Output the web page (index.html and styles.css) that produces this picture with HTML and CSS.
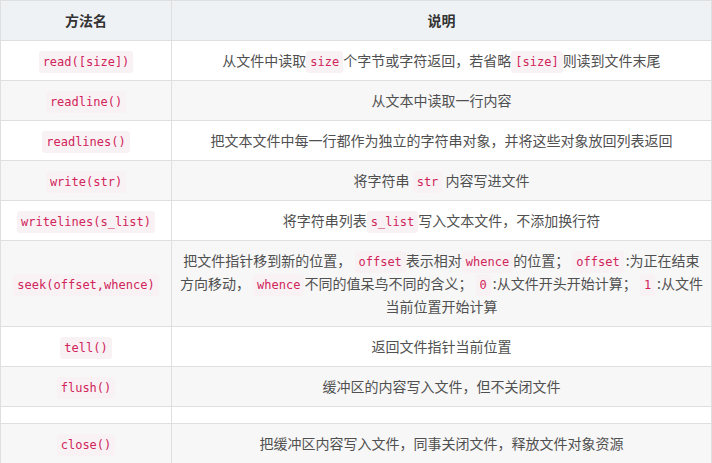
FILE: index.html
```html
<!DOCTYPE html>
<html lang="zh-CN">
<head>
<meta charset="utf-8">
<title>文件方法</title>
<link rel="stylesheet" href="styles.css">
</head>
<body>
<table class="methods">
  <thead>
    <tr><th class="col-name">方法名</th><th>说明</th></tr>
  </thead>
  <tbody>
    <tr><td><code>read([size])</code></td><td>从文件中读取<code>size</code>个字节或字符返回，若省略<code>[size]</code>则读到文件末尾</td></tr>
    <tr><td><code>readline()</code></td><td>从文本中读取一行内容</td></tr>
    <tr><td><code>readlines()</code></td><td>把文本文件中每一行都作为独立的字符串对象，并将这些对象放回列表返回</td></tr>
    <tr><td><code>write(str)</code></td><td>将字符串 <code>str</code> 内容写进文件</td></tr>
    <tr><td><code>writelines(s_list)</code></td><td>将字符串列表<code>s_list</code>写入文本文件，不添加换行符</td></tr>
    <tr><td><code>seek(offset,whence)</code></td><td>把文件指针移到新的位置， <code>offset</code>表示相对<code>whence</code>的位置； <code class="colon">offset</code>:为正在结束方向移动， <code>whence</code>不同的值呆鸟不同的含义； <code class="colon">0</code>:从文件开头开始计算； <code class="colon">1</code>:从文件当前位置开始计算</td></tr>
    <tr><td><code>tell()</code></td><td>返回文件指针当前位置</td></tr>
    <tr><td><code>flush()</code></td><td>缓冲区的内容写入文件，但不关闭文件</td></tr>
    <tr class="empty"><td></td><td></td></tr>
    <tr><td><code>close()</code></td><td>把缓冲区内容写入文件，同事关闭文件，释放文件对象资源</td></tr>
  </tbody>
</table>
</body>
</html>
```
FILE: styles.css
```css
html, body {
  margin: 0;
  padding: 0;
  background: #ffffff;
}
body {
  font-family: "Noto Sans CJK SC", "Noto Sans", sans-serif;
  font-size: 14px;
  color: #505050;
}
.methods {
  width: 712px;
  border-collapse: collapse;
  table-layout: fixed;
}
.methods th,
.methods td {
  border: 1px solid #dfdfdf;
  padding: 8px 7px;
  height: 23px;
  line-height: 23px;
  text-align: center;
  vertical-align: middle;
  box-sizing: content-box;
}
.methods .col-name {
  width: 156px;
}
.methods th {
  background: #eff2f5;
  color: #333333;
  font-weight: bold;
}
.methods tbody tr:nth-child(even) td {
  background: #f7f7f7;
}
.methods tr.empty td {
  height: 0;
  line-height: 0;
}
code {
  font-family: "DejaVu Sans Mono", "Liberation Mono", monospace;
  font-size: 12px;
  line-height: 12px;
  color: #d0245a;
  background: #f9f2f4;
  padding: 4px 4px;
  border-radius: 3px;
}
code.colon {
  margin-right: 2px;
}
```
